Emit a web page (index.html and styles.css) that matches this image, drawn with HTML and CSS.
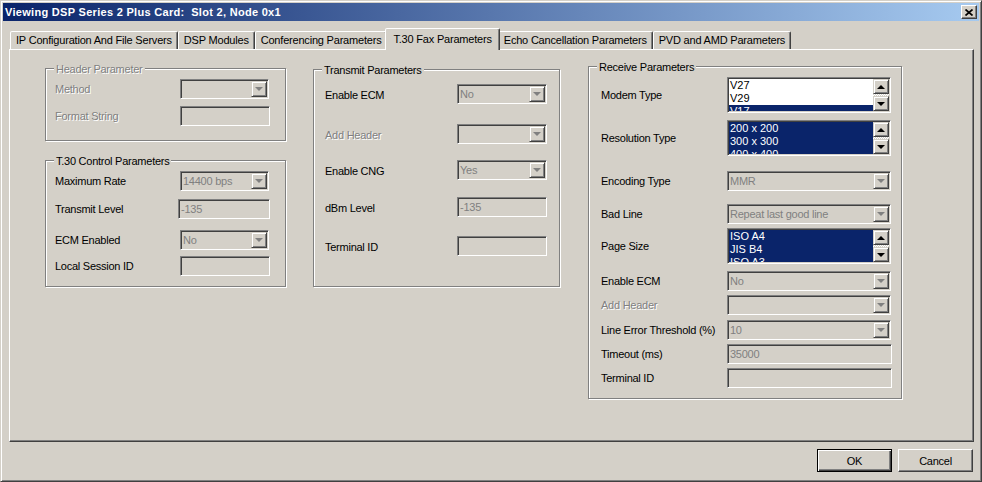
FILE: index.html
```html
<!DOCTYPE html>
<html lang="en">
<head>
    <meta charset="UTF-8">
    <title>Viewing DSP Series 2 Plus Card</title>
    <link rel="stylesheet" href="styles.css">
</head>
<body>
    <div class="window">
        <div class="titlebar">
            <span class="title">Viewing DSP Series 2 Plus Card:&nbsp; Slot 2, Node 0x1</span>
            <span class="close">
                <svg width="8" height="7" viewBox="0 0 8 7"><path d="M0.5 0.5L7.5 6.5M7.5 0.5L0.5 6.5" stroke="#000" stroke-width="1.7"/></svg>
            </span>
        </div>

        <div class="tabs">
            <div class="tab">IP Configuration And File Servers</div>
            <div class="tab">DSP Modules</div>
            <div class="tab">Conferencing Parameters</div>
            <div class="tab active">T.30 Fax Parameters</div>
            <div class="tab">Echo Cancellation Parameters</div>
            <div class="tab">PVD and AMD Parameters</div>
        </div>

        <div class="panel">
            <div class="col col-left">
                <div class="group g-header">
                    <span class="legend disabled">Header Parameter</span>
                    <div class="row">
                        <span class="lbl disabled">Method</span>
                        <div class="combo"><span class="val"></span><span class="drop"></span></div>
                    </div>
                    <div class="row">
                        <span class="lbl disabled">Format String</span>
                        <div class="edit"></div>
                    </div>
                </div>

                <div class="group g-control">
                    <span class="legend">T.30 Control Parameters</span>
                    <div class="row">
                        <span class="lbl">Maximum Rate</span>
                        <div class="combo"><span class="val">14400 bps</span><span class="drop"></span></div>
                    </div>
                    <div class="row">
                        <span class="lbl">Transmit Level</span>
                        <div class="edit shift">-135</div>
                    </div>
                    <div class="row">
                        <span class="lbl">ECM Enabled</span>
                        <div class="combo"><span class="val">No</span><span class="drop"></span></div>
                    </div>
                    <div class="row">
                        <span class="lbl">Local Session ID</span>
                        <div class="edit"></div>
                    </div>
                </div>
            </div>

            <div class="col col-mid">
                <div class="group g-transmit">
                    <span class="legend">Transmit Parameters</span>
                    <div class="row">
                        <span class="lbl">Enable ECM</span>
                        <div class="combo"><span class="val">No</span><span class="drop"></span></div>
                    </div>
                    <div class="row">
                        <span class="lbl disabled">Add Header</span>
                        <div class="combo"><span class="val"></span><span class="drop"></span></div>
                    </div>
                    <div class="row">
                        <span class="lbl">Enable CNG</span>
                        <div class="combo"><span class="val">Yes</span><span class="drop"></span></div>
                    </div>
                    <div class="row">
                        <span class="lbl">dBm Level</span>
                        <div class="edit">-135</div>
                    </div>
                    <div class="row">
                        <span class="lbl">Terminal ID</span>
                        <div class="edit"></div>
                    </div>
                </div>
            </div>

            <div class="col col-right">
                <div class="group g-receive">
                    <span class="legend">Receive Parameters</span>
                    <div class="row">
                        <span class="lbl">Modem Type</span>
                        <div class="list">
                            <div class="items">
                                <div class="item">V27</div>
                                <div class="item">V29</div>
                                <div class="item selected">V17</div>
                            </div>
                            <div class="scrollbar"><span class="sb up"></span><span class="track"></span><span class="sb down"></span></div>
                        </div>
                    </div>
                    <div class="row">
                        <span class="lbl">Resolution Type</span>
                        <div class="list">
                            <div class="items">
                                <div class="item selected">200 x 200</div>
                                <div class="item selected">300 x 300</div>
                                <div class="item selected">400 x 400</div>
                            </div>
                            <div class="scrollbar"><span class="sb up"></span><span class="track"></span><span class="sb down"></span></div>
                        </div>
                    </div>
                    <div class="row">
                        <span class="lbl">Encoding Type</span>
                        <div class="combo"><span class="val">MMR</span><span class="drop"></span></div>
                    </div>
                    <div class="row">
                        <span class="lbl">Bad Line</span>
                        <div class="combo"><span class="val">Repeat last good line</span><span class="drop"></span></div>
                    </div>
                    <div class="row">
                        <span class="lbl">Page Size</span>
                        <div class="list">
                            <div class="items">
                                <div class="item selected">ISO A4</div>
                                <div class="item selected">JIS B4</div>
                                <div class="item selected">ISO A3</div>
                            </div>
                            <div class="scrollbar"><span class="sb up"></span><span class="track"></span><span class="sb down"></span></div>
                        </div>
                    </div>
                    <div class="row">
                        <span class="lbl">Enable ECM</span>
                        <div class="combo"><span class="val">No</span><span class="drop"></span></div>
                    </div>
                    <div class="row">
                        <span class="lbl disabled">Add Header</span>
                        <div class="combo"><span class="val"></span><span class="drop"></span></div>
                    </div>
                    <div class="row">
                        <span class="lbl">Line Error Threshold (%)</span>
                        <div class="combo"><span class="val">10</span><span class="drop"></span></div>
                    </div>
                    <div class="row">
                        <span class="lbl">Timeout (ms)</span>
                        <div class="edit">35000</div>
                    </div>
                    <div class="row">
                        <span class="lbl">Terminal ID</span>
                        <div class="edit"></div>
                    </div>
                </div>
            </div>
        </div>

        <div class="actions">
            <button class="btn default">OK</button>
            <button class="btn">Cancel</button>
        </div>
    </div>
</body>
</html>
```

FILE: styles.css
```css
body {
    margin: 0;
    background: #d4d0c8;
    font-family: "Liberation Sans", Arial, sans-serif;
    font-size: 11px;
    letter-spacing: -0.25px;
    color: #000;
}

.window {
    width: 982px;
    height: 482px;
    box-sizing: border-box;
    display: flex;
    flex-direction: column;
    padding: 2px;
    background: #d4d0c8;
    border: 1px solid;
    border-color: #d4d0c8 #404040 #404040 #d4d0c8;
    box-shadow: inset 1px 1px #fff, inset -1px -1px #808080;
}

/* title bar */
.titlebar {
    height: 18px;
    flex: none;
    display: flex;
    align-items: center;
    justify-content: space-between;
    padding: 0 2px;
    background: linear-gradient(to right, #0a246a, #a6caf0);
}

.title {
    color: #fff;
    font-weight: bold;
    letter-spacing: 0.3px;
}

.close {
    width: 16px;
    height: 14px;
    box-sizing: border-box;
    display: flex;
    align-items: center;
    justify-content: center;
    background: #d4d0c8;
    border: 1px solid;
    border-color: #fff #404040 #404040 #fff;
    box-shadow: inset -1px -1px #808080;
}

/* tabs */
.tabs {
    height: 28px;
    flex: none;
    display: flex;
    align-items: flex-end;
    padding-left: 7px;
}

.tab {
    height: 18px;
    box-sizing: border-box;
    padding: 0 5px;
    line-height: 17px;
    letter-spacing: -0.2px;
    white-space: nowrap;
    border: 1px solid;
    border-bottom: none;
    border-color: #fff #404040 transparent #fff;
    border-radius: 2px 2px 0 0;
    box-shadow: inset -1px 0 #808080;
    background: #d4d0c8;
}

.tab.active {
    height: 22px;
    margin: 0 -2px -1px;
    padding: 0 7px 1px;
    line-height: 20px;
    position: relative;
    z-index: 1;
}

/* tab page */
.panel {
    height: 393px;
    flex: none;
    box-sizing: border-box;
    margin: 0 5px 0 6px;
    padding: 16px 0 0 35px;
    display: flex;
    align-items: flex-start;
    border: 1px solid;
    border-color: #fff #404040 #404040 #fff;
    box-shadow: inset -1px -1px #808080;
}

.col {
    display: flex;
    flex-direction: column;
}

.col-left {
    margin-top: 2px;
    gap: 19px;
}

.col-mid {
    margin-top: 3px;
    margin-left: 27px;
}

.col-right {
    margin-left: 28px;
}

/* group boxes */
.group {
    position: relative;
    box-sizing: border-box;
    display: grid;
    align-items: start;
    border: 1px solid #808080;
    box-shadow: inset 1px 1px #fff, 1px 1px #fff;
}

.legend {
    position: absolute;
    top: -6px;
    left: 8px;
    padding: 0 2px;
    line-height: 13px;
    background: #d4d0c8;
}

.g-header {
    width: 241px;
    padding: 10px 0 14px 9px;
    grid-template-rows: 27px 20px;
}

.g-control {
    width: 241px;
    padding: 10px 0 10px 9px;
    grid-template-rows: 28px 31px 26px 20px;
}

.g-transmit {
    width: 247px;
    padding: 14px 0 30px 11px;
    grid-template-rows: 40px 36px 37px 39px 20px;
}

.g-receive {
    width: 314px;
    padding: 10px 0 10px 12px;
    grid-template-rows: 43px 51px 33px 24px 43px 24px 25px 24px 24px 20px;
}

.row {
    display: flex;
    align-items: center;
}

.lbl {
    flex: none;
    line-height: 13px;
    white-space: nowrap;
}

.col-left .lbl { width: 125px; }
.col-mid .lbl { width: 132px; padding-top: 3px; }
.col-right .lbl { width: 126px; }

.disabled {
    color: #808080;
    text-shadow: 1px 1px #fff;
}

/* sunken fields */
.combo,
.edit,
.list {
    box-sizing: border-box;
    padding: 1px;
    border: 1px solid;
    border-color: #808080 #fff #fff #808080;
    box-shadow: inset 1px 1px #404040, inset -1px -1px #d4d0c8;
}

.combo,
.edit {
    height: 20px;
    display: flex;
    align-items: center;
    color: #808080;
    white-space: nowrap;
}

.edit {
    padding-left: 2px;
}

.col-left .combo { width: 89px; }
.col-left .edit { width: 90px; }
.col-left .edit.shift { margin-left: -2px; width: 92px; }
.col-mid .combo,
.col-mid .edit { width: 90px; }
.col-right .combo,
.col-right .list { width: 164px; }
.col-right .edit { width: 165px; }

.val {
    flex: 1;
    padding-left: 1px;
    overflow: hidden;
}

.drop,
.sb {
    flex: none;
    width: 16px;
    height: 16px;
    box-sizing: border-box;
    display: flex;
    align-items: center;
    justify-content: center;
    background: #d4d0c8;
    border: 1px solid;
    border-color: #d4d0c8 #404040 #404040 #d4d0c8;
    box-shadow: inset 1px 1px #fff, inset -1px -1px #808080;
}

.drop::before,
.sb.down::before {
    content: "";
    border-left: 4px solid transparent;
    border-right: 4px solid transparent;
    border-top: 4px solid #808080;
}

.sb.down::before {
    border-top-color: #000;
}

.sb.up::before {
    content: "";
    border-left: 4px solid transparent;
    border-right: 4px solid transparent;
    border-bottom: 4px solid #000;
}

/* list boxes */
.list {
    height: 36px;
    display: flex;
    background: #fff;
}

.items {
    flex: 1;
    overflow: hidden;
    background: #fff;
    letter-spacing: 0;
}

.item {
    height: 13px;
    line-height: 13px;
    padding-left: 1px;
    white-space: nowrap;
}

.item.selected {
    background: #0a246a;
    color: #fff;
}

.scrollbar {
    width: 16px;
    display: flex;
    flex-direction: column;
}

.sb {
    height: 15px;
}

.track {
    flex: 1;
    background: repeating-conic-gradient(#fff 0 25%, #d4d0c8 0 50%) 0 0 / 2px 2px;
}

/* dialog buttons */
.actions {
    display: flex;
    justify-content: flex-end;
    gap: 6px;
    margin: 7px 6px 0 0;
}

.btn {
    width: 75px;
    height: 23px;
    box-sizing: border-box;
    padding: 0;
    font: inherit;
    letter-spacing: inherit;
    color: #000;
    background: #d4d0c8;
    border: 1px solid;
    border-color: #fff #404040 #404040 #fff;
    box-shadow: inset -1px -1px #808080;
}

.btn.default {
    border-color: #000;
    box-shadow: inset 1px 1px #fff, inset -1px -1px #404040, inset -2px -2px #808080;
}
```
